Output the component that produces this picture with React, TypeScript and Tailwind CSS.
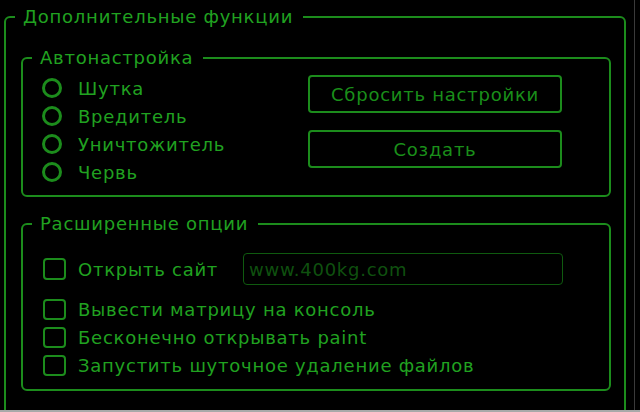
import React from "react";

const LINE = "border-[#1c8c1c]";

function Radio({ label }: { label: string }) {
  return (
    <div className="flex h-[28px] items-center">
      <span className="box-border h-[20px] w-[20px] rounded-full border-[3px] border-[#1c8c1c]" />
      <span className="ml-[16px] text-[#20a220]">{label}</span>
    </div>
  );
}

function Check({ label, h = "h-[21px]" }: { label: string; h?: string }) {
  return (
    <div className="flex items-center">
      <span className={`box-border w-[23px] ${h} rounded-[4px] border-2 border-[#1c8c1c]`} />
      <span className="ml-[12px] text-[#20a220]">{label}</span>
    </div>
  );
}

export default function App() {
  return (
    <div
      className="relative h-[412px] w-[640px] overflow-hidden bg-black text-[18px] tracking-[0.75px]"
      style={{ fontFamily: '"DejaVu Sans", Verdana, sans-serif' }}
    >
      <fieldset className={`ml-[4px] mt-[7px] h-[460px] w-[622px] rounded-[6px] border-2 ${LINE}`}>
        <legend className="ml-[9px] pl-[8px] pr-[10px] leading-[20px] text-[#20a220]">
          Дополнительные функции
        </legend>
        <div className="pl-[15px] pr-[13px] pt-[21px]">
          <fieldset className={`rounded-[6px] border-2 ${LINE}`}>
            <legend className="ml-[9px] pl-[8px] pr-[10px] leading-[20px] text-[#20a220]">
              Автонастройка
            </legend>
            <div className="flex items-start justify-between pb-[9px] pl-[19px] pr-[47px] pt-[6px]">
              <div className="flex flex-col">
                <Radio label="Шутка" />
                <Radio label="Вредитель" />
                <Radio label="Уничтожитель" />
                <Radio label="Червь" />
              </div>
              <div className="mt-[1px] flex w-[254px] flex-col gap-[17px]">
                <button className="h-[38px] rounded-[4px] border-2 border-[#1c8c1c] bg-black text-[#1a8f1a]">
                  Сбросить настройки
                </button>
                <button className="h-[38px] rounded-[4px] border-2 border-[#1c8c1c] bg-black text-[#1a8f1a]">
                  Создать
                </button>
              </div>
            </div>
          </fieldset>

          <fieldset className={`mt-[17px] rounded-[6px] border-2 ${LINE}`}>
            <legend className="ml-[9px] pl-[8px] pr-[10px] leading-[20px] text-[#20a220]">
              Расширенные опции
            </legend>
            <div className="flex flex-col pb-[10px] pl-[20px] pt-[19px]">
              <div className="flex h-[32px] items-center">
                <div className="w-[200px]">
                  <Check label="Открыть сайт" h="h-[22px]" />
                </div>
                <div className="flex h-[32px] w-[320px] items-center rounded-[4px] border border-[#0f5a0f] pl-[5px] text-[#0f500f]">
                  www.400kg.com
                </div>
              </div>
              <div className="mt-[10px] flex flex-col">
                <div className="flex h-[28px] items-center">
                  <Check label="Вывести матрицу на консоль" />
                </div>
                <div className="flex h-[28px] items-center">
                  <Check label="Бесконечно открывать paint" />
                </div>
                <div className="flex h-[28px] items-center">
                  <Check label="Запустить шуточное удаление файлов" />
                </div>
              </div>
            </div>
          </fieldset>
        </div>
      </fieldset>
      <div className="absolute right-[5px] top-0 h-full w-px bg-[#3a3a3a]" />
      <div className="absolute bottom-0 left-0 h-[2px] w-full bg-[#a9a9a9]" />
    </div>
  );
}
